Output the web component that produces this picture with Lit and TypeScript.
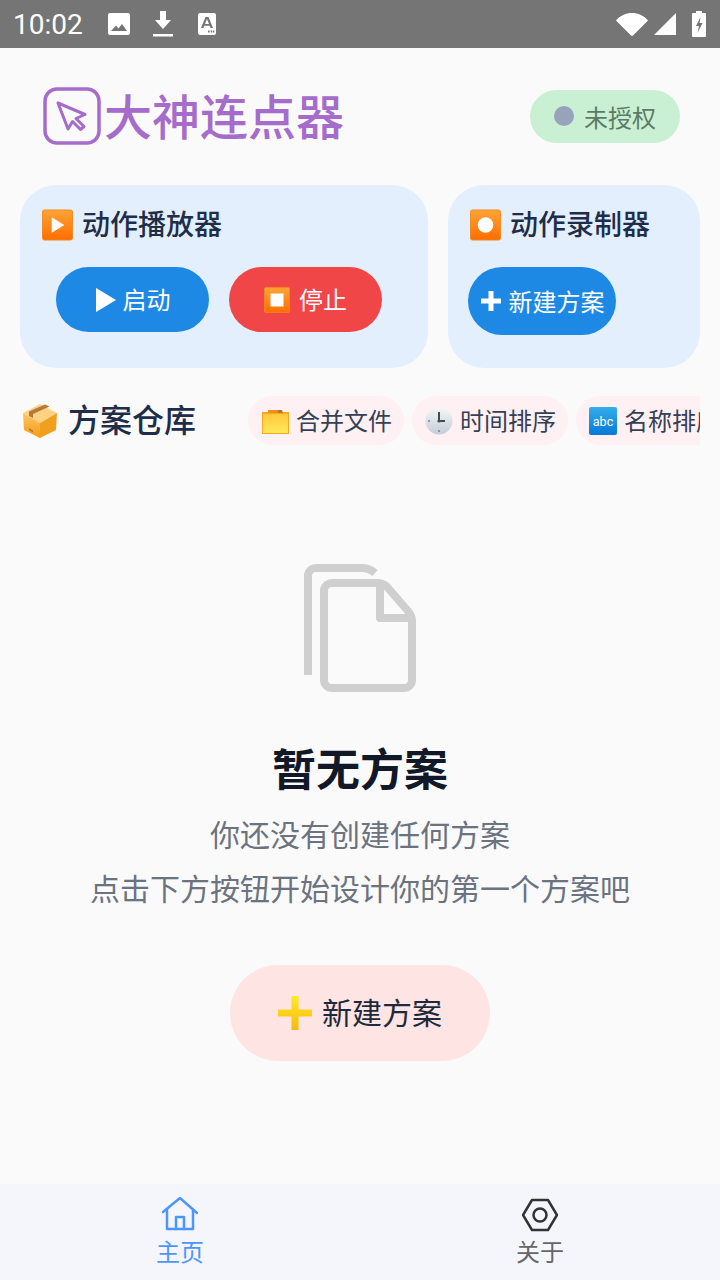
import { html, svg, css, LitElement } from 'lit';
import { customElement } from 'lit/decorators.js';

const tile = (cls: string, inner: unknown, id: string) => html`
  <svg class=${cls} viewBox="0 0 32 32">
    <defs>
      <linearGradient id=${id} x1="0" y1="0" x2="0" y2="1">
        <stop offset="0" stop-color="#ffa436" />
        <stop offset="1" stop-color="#ff6d00" />
      </linearGradient>
    </defs>
    <rect x="0.5" y="0.5" width="31" height="31" rx="2" fill="url(#${id})" stroke="#f08a20" />
    ${inner}
  </svg>
`;

@customElement('app-root')
export class AppRoot extends LitElement {
  static styles = css`
    :host {
      display: block;
      font-family: 'Noto Sans CJK SC', 'Liberation Sans', sans-serif;
      color: #1e2d4a;
    }
    .page {
      height: 1280px;
      display: flex;
      flex-direction: column;
      background: #fafafa;
      overflow: hidden;
    }

    .status {
      height: 48px;
      flex: none;
      background: #757575;
      display: flex;
      align-items: center;
      padding: 0 14px 0 13px;
      color: #fff;
    }
    .time {
      font-family: Roboto, sans-serif;
      font-size: 28px;
      width: 95px;
    }
    .status svg {
      display: block;
      flex: none;
    }
    .st-img { width: 22px; height: 22px; }
    .st-dl { width: 20px; height: 26px; margin-left: 23px; }
    .st-a { width: 18px; height: 22px; margin-left: 25px; }
    .st-wifi { width: 32px; height: 24px; margin-left: auto; }
    .st-sig { width: 22px; height: 22px; margin-left: 6px; }
    .st-bat { width: 14px; height: 26px; margin-left: 16px; }

    main {
      flex: 1;
      min-height: 0;
    }

    .header {
      display: flex;
      align-items: center;
      padding: 39px 40px 40px 43px;
    }
    .logo {
      width: 58px;
      height: 58px;
      flex: none;
      display: block;
    }
    .brand {
      margin: 0 0 4px 3px;
      font-size: 48px;
      line-height: 54px;
      font-weight: 500;
      color: #a66ccc;
    }
    .badge {
      margin-left: auto;
      width: 150px;
      height: 53px;
      border-radius: 27px;
      background: #c9f0d2;
      display: flex;
      align-items: center;
      padding-left: 24px;
      box-sizing: border-box;
      font-size: 24px;
      color: #5e7a66;
    }
    .dot {
      width: 20px;
      height: 20px;
      border-radius: 50%;
      background: #97a3ba;
      margin-right: 10px;
    }

    .cards {
      display: flex;
      gap: 20px;
      padding: 0 20px;
    }
    .card {
      height: 183px;
      box-sizing: border-box;
      border-radius: 36px;
      background: #e3effc;
      padding: 20px;
    }
    .card.play { width: 408px; }
    .card.rec { width: 252px; }
    .card-title {
      display: flex;
      align-items: center;
      height: 40px;
      margin: 0 0 22px 2px;
      font-size: 28px;
      font-weight: 500;
      gap: 9px;
    }
    .card-title span { margin-bottom: 4px; }
    .tile-lg { width: 31px; height: 32px; display: block; flex: none; }
    .btns {
      display: flex;
      gap: 20px;
      padding-left: 16px;
    }
    .btn {
      display: flex;
      align-items: center;
      justify-content: center;
      width: 153px;
      height: 65px;
      border-radius: 33px;
      color: #fff;
      font-size: 24px;
    }
    .btn span { margin-bottom: 2px; }
    .btn.blue { background: #1e88e5; }
    .btn.red { background: #f14648; }
    .btn.wide {
      width: 148px;
      height: 68px;
      border-radius: 34px;
    }
    .ic-play { width: 20px; height: 24px; margin: 0 7px 0 1px; display: block; }
    .tile-sm { width: 26px; height: 26px; margin-right: 9px; display: block; }
    .ic-plus { width: 20px; height: 20px; margin: 0 8px 0 1px; display: block; }

    .section {
      display: flex;
      align-items: center;
      margin-top: 28px;
      padding: 0 20px 0 23px;
    }
    .box { width: 34px; height: 34px; flex: none; display: block; }
    .section h2 {
      margin: 0 0 4px 11px;
      font-size: 32px;
      line-height: 45px;
      font-weight: 500;
      flex: none;
    }
    .chips {
      display: flex;
      gap: 8px;
      margin-left: 52px;
      flex: 1;
      min-width: 0;
      overflow: hidden;
    }
    .chip {
      flex: none;
      height: 49px;
      display: flex;
      align-items: center;
      gap: 7px;
      padding: 0 12px 0 13px;
      border-radius: 25px;
      background: #fff0f3;
      font-size: 24px;
      color: #334155;
    }
    .chip span { margin-bottom: 2px; }
    .chip svg { width: 28px; height: 28px; display: block; flex: none; }

    .empty {
      display: flex;
      flex-direction: column;
      align-items: center;
      padding-top: 119px;
    }
    .docs { width: 112px; height: 128px; display: block; }
    .empty h3 {
      margin: 45px 0 9px;
      font-size: 44px;
      line-height: 60px;
      font-weight: 700;
      color: #111827;
    }
    .empty p {
      margin: 0;
      font-size: 30px;
      line-height: 54px;
      color: #6b7280;
      text-align: center;
    }
    .cta {
      margin-top: 51px;
      width: 260px;
      height: 96px;
      border-radius: 48px;
      background: #ffe4e4;
      display: flex;
      align-items: center;
      justify-content: center;
      gap: 10px;
      font-size: 30px;
      color: #1e293b;
    }
    .cta span { margin-bottom: 4px; }
    .cta svg { width: 34px; height: 34px; display: block; }

    nav {
      flex: none;
      height: 96px;
      background: #f5f6fb;
      display: flex;
    }
    .tab {
      flex: 1;
      display: flex;
      flex-direction: column;
      align-items: center;
      padding-top: 13px;
      font-size: 24px;
      line-height: 36px;
      color: #666;
    }
    .tab.active { color: #4d96ff; }
    .tab svg { width: 36px; height: 36px; display: block; }
  `;

  render() {
    return html`
      <div class="page">
        <div class="status">
          <span class="time">10:02</span>
          <svg class="st-img" viewBox="0 0 22 22">
            <path fill="#fff" fill-rule="evenodd" d="M2 0h18a2 2 0 0 1 2 2v18a2 2 0 0 1-2 2H2a2 2 0 0 1-2-2V2a2 2 0 0 1 2-2zM3 18h16l-5-7-3.500 4.500-2.500-3z" />
          </svg>
          <svg class="st-dl" viewBox="0 0 20 26">
            <path fill="#fff" d="M7 0h6v9h5l-8 9-8-9h5zM0 23h20v2.500H0z" />
          </svg>
          <svg class="st-a" viewBox="0 0 18 22">
            <path fill="#fff" fill-rule="evenodd" d="M2 0h14a2 2 0 0 1 2 2v18a2 2 0 0 1-2 2H2a2 2 0 0 1-2-2V2a2 2 0 0 1 2-2zM7.500 4L3 15h2.500l.8-2.200h5.400l.8 2.200H15L10.500 4zM7 11l2-5 2 5zM10 17.500v2h1.600v-2zM12.700 17.500v2h1.600v-2zM15 17.500v2h1.300v-2z" />
          </svg>
          <svg class="st-wifi" viewBox="0 0 32 24">
            <path fill="#fff" d="M0 8.500C4 3.500 10 1 16 1s12 2.500 16 7.500L17.500 23a2 2 0 0 1-3 0z" />
          </svg>
          <svg class="st-sig" viewBox="0 0 22 22">
            <path fill="#fff" d="M22 0v22H0z" />
          </svg>
          <svg class="st-bat" viewBox="0 0 14 26">
            <path fill="#fff" fill-rule="evenodd" d="M4 0h6v2h3a1 1 0 0 1 1 1v22a1 1 0 0 1-1 1H1a1 1 0 0 1-1-1V3a1 1 0 0 1 1-1h3zM8.500 6L4 15h3l-1.500 7L10.500 12H7.500z" />
          </svg>
        </div>

        <main>
          <div class="header">
            <svg class="logo" viewBox="0 0 58 58">
              <rect x="2" y="2" width="54" height="54" rx="12" fill="none" stroke="#a66ccc" stroke-width="3.500" />
              <path
                d="M15 16L42 27.500 33 31.500 41 39.500 37.500 42.500 29.500 34.500 25 42z"
                fill="none"
                stroke="#a66ccc"
                stroke-width="3"
                stroke-linejoin="round"
              />
            </svg>
            <span class="brand">大神连点器</span>
            <div class="badge"><span class="dot"></span>未授权</div>
          </div>

          <div class="cards">
            <section class="card play">
              <div class="card-title">
                ${tile('tile-lg', svg`<path d="M10 8l13 8-13 8z" fill="#fff" />`, 't1')}
                <span>动作播放器</span>
              </div>
              <div class="btns">
                <div class="btn blue">
                  <svg class="ic-play" viewBox="0 0 20 24"><path d="M0 0l20 12L0 24z" fill="#fff" /></svg>
                  <span>启动</span>
                </div>
                <div class="btn red">
                  ${tile('tile-sm', svg`<rect x="8" y="8" width="16" height="16" fill="#fff" />`, 't2')}
                  <span>停止</span>
                </div>
              </div>
            </section>
            <section class="card rec">
              <div class="card-title">
                ${tile('tile-lg', svg`<circle cx="16" cy="16" r="8" fill="#fff" />`, 't3')}
                <span>动作录制器</span>
              </div>
              <div class="btn blue wide">
                <svg class="ic-plus" viewBox="0 0 20 20"><path d="M7.500 0h5v7.500H20v5h-7.500V20h-5v-7.500H0v-5h7.500z" fill="#fff" /></svg>
                <span>新建方案</span>
              </div>
            </section>
          </div>

          <div class="section">
            <svg class="box" viewBox="0 0 34 34">
              <defs>
                <linearGradient id="bx" x1="0" y1="0" x2="0" y2="1">
                  <stop offset="0" stop-color="#ffc766" />
                  <stop offset="1" stop-color="#f59a12" />
                </linearGradient>
              </defs>
              <path d="M17 0L34 9 17 19 0 9z" fill="#ffd382" />
              <path d="M0 9l17 10v15L1 26z" fill="url(#bx)" />
              <path d="M34 9L17 19v15l16-8z" fill="#f0a01e" />
              <path d="M6 7.500L22 .5l4.500 2L10 10v4l-4-2z" fill="#b5793a" />
              <path d="M6 24l4 2.500v2l-4-2.500z" fill="#b5793a" />
            </svg>
            <h2>方案仓库</h2>
            <div class="chips">
              <div class="chip">
                <svg viewBox="0 0 28 28">
                  <defs>
                    <linearGradient id="fd" x1="0" y1="0" x2="0" y2="1">
                      <stop offset="0" stop-color="#ffc93c" />
                      <stop offset="1" stop-color="#ffe95a" />
                    </linearGradient>
                  </defs>
                  <path d="M1 5h27v22H1z" fill="#f6a81f" />
                  <path d="M7 3h10v3H7z" fill="#f28c1a" />
                  <path d="M17 3h4l1 3h-5z" fill="#b87a2a" />
                  <path d="M2 7h25v19H2z" fill="url(#fd)" />
                </svg>
                <span>合并文件</span>
              </div>
              <div class="chip">
                <svg viewBox="0 0 28 28">
                  <defs>
                    <linearGradient id="clk" x1="0" y1="0" x2="0" y2="1">
                      <stop offset="0" stop-color="#f4f6f7" />
                      <stop offset="1" stop-color="#c3ced5" />
                    </linearGradient>
                  </defs>
                  <circle cx="14" cy="14" r="13.500" fill="url(#clk)" />
                  <path d="M14 5v9h6" fill="none" stroke="#454b52" stroke-width="2" />
                  <circle cx="14" cy="14" r="1.600" fill="#454b52" />
                  <path d="M14 23v2M3 14h2" stroke="#7a8288" stroke-width="1.500" />
                </svg>
                <span>时间排序</span>
              </div>
              <div class="chip">
                <svg viewBox="0 0 28 28">
                  <defs>
                    <linearGradient id="abc" x1="0" y1="0" x2="0" y2="1">
                      <stop offset="0" stop-color="#35aeea" />
                      <stop offset="1" stop-color="#0579d8" />
                    </linearGradient>
                  </defs>
                  <rect width="28" height="28" rx="2" fill="url(#abc)" />
                  <text x="14" y="18.500" text-anchor="middle" font-family="Roboto, sans-serif" font-size="12.500" fill="#fff">abc</text>
                </svg>
                <span>名称排序</span>
              </div>
            </div>
          </div>

          <div class="empty">
            <svg class="docs" viewBox="0 0 112 128" fill="none" stroke="#cfcfcf" stroke-width="8">
              <path d="M4 111V12a8 8 0 0 1 8-8h46q7 0 13 5" />
              <path stroke-linejoin="round" d="M28 19h46q6 0 10 5l20 23q4 5 4 10v59a8 8 0 0 1-8 8H28a8 8 0 0 1-8-8V27a8 8 0 0 1 8-8z" />
              <path stroke-linejoin="round" d="M76 19v35h32" />
            </svg>
            <h3>暂无方案</h3>
            <p>你还没有创建任何方案<br />点击下方按钮开始设计你的第一个方案吧</p>
            <div class="cta">
              <svg viewBox="0 0 34 34">
                <defs>
                  <linearGradient id="plus" x1="0" y1="0" x2="0" y2="1">
                    <stop offset="0" stop-color="#ffe926" />
                    <stop offset="1" stop-color="#f8b90f" />
                  </linearGradient>
                </defs>
                <path d="M13.500 0h7v13.500H34v7H20.500V34h-7V20.500H0v-7h13.500z" fill="url(#plus)" />
              </svg>
              <span>新建方案</span>
            </div>
          </div>
        </main>

        <nav>
          <div class="tab active">
            <svg viewBox="0 0 36 36" fill="none" stroke="#4d96ff" stroke-width="2.500" stroke-linejoin="round" stroke-linecap="round">
              <path d="M1 15L18 1l17 15" />
              <path d="M5 12.500V32h26V12.500" />
              <path d="M14 32V20h8v12" />
            </svg>
            主页
          </div>
          <div class="tab">
            <svg viewBox="0 0 36 36" fill="none" stroke="#333" stroke-width="2.500" stroke-linejoin="round">
              <path d="M10 3h16l9 15-9 15H10L1 18z" />
              <circle cx="18" cy="18" r="6.500" />
            </svg>
            关于
          </div>
        </nav>
      </div>
    `;
  }
}
